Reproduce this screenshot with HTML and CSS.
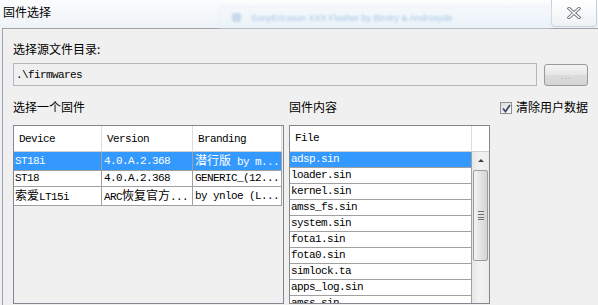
FILE: index.html
```html
<!DOCTYPE html>
<html>

<head>
  <meta charset="UTF-8">
  <title>固件选择</title>
  <link rel="stylesheet" href="styles.css">
</head>

<body>
  <div id="dlg_firmware">
    <!-- 标题栏 -->
    <div class="titlebar">
      <div class="title">固件选择</div>
      <div class="ghost">
        <span class="ghost-icon"></span>
        <span class="ghost-text">SonyEricsson XXX Flasher by Bin4ry &amp; Androxyde</span>
      </div>
      <div class="btn-close">
        <svg width="14" height="12" viewBox="0 0 14 12">
          <path d="M2 1.5 L12 10.5 M12 1.5 L2 10.5" stroke="#6d737b" stroke-width="3.2" stroke-linecap="square" fill="none" />
          <path d="M2 1.5 L12 10.5 M12 1.5 L2 10.5" stroke="#ffffff" stroke-width="1.4" stroke-linecap="square" fill="none" />
        </svg>
      </div>
    </div>

    <div class="client">
      <div class="label">选择源文件目录:</div>
      <div class="path-row">
        <input class="path-input" type="text" value=".\firmwares" readonly>
        <button class="btn-browse">...</button>
      </div>

      <div class="panes">
        <div class="pane pane-left">
          <div class="label">选择一个固件</div>
          <div class="grid">
            <table class="tb tb-firmware">
              <thead>
                <tr>
                  <th class="col-device">Device</th>
                  <th class="col-version">Version</th>
                  <th class="col-branding">Branding</th>
                </tr>
              </thead>
              <tbody>
                <tr class="selected">
                  <td>ST18i</td>
                  <td>4.0.A.2.368</td>
                  <td><span class="cjk">潜行版</span> by m...</td>
                </tr>
                <tr>
                  <td>ST18</td>
                  <td>4.0.A.2.368</td>
                  <td>GENERIC_(12...</td>
                </tr>
                <tr>
                  <td><span class="cjk">索爱</span>LT15i</td>
                  <td>ARC<span class="cjk">恢复官方</span>...</td>
                  <td>by ynloe (L...</td>
                </tr>
              </tbody>
            </table>
          </div>
        </div>

        <div class="pane pane-right">
          <div class="label">固件内容</div>
          <div class="grid grid-files">
            <div class="files-head">
              <div class="th-file">File</div>
              <div class="th-rest"></div>
            </div>
            <div class="files-body">
              <div class="file-list">
                <div class="file-row selected">adsp.sin</div>
                <div class="file-row">loader.sin</div>
                <div class="file-row">kernel.sin</div>
                <div class="file-row">amss_fs.sin</div>
                <div class="file-row">system.sin</div>
                <div class="file-row">fota1.sin</div>
                <div class="file-row">fota0.sin</div>
                <div class="file-row">simlock.ta</div>
                <div class="file-row">apps_log.sin</div>
                <div class="file-row">amss.sin</div>
              </div>
              <div class="vscroll">
                <div class="vscroll-up"></div>
                <div class="vscroll-thumb">
                  <div class="grip"></div>
                </div>
              </div>
            </div>
          </div>
        </div>

        <div class="pane pane-opts">
          <label class="check">
            <span class="check-box">
              <svg width="9" height="9" viewBox="0 0 9 9">
                <path d="M1 4.5 L3.5 7.5 L8 1" stroke="#3c4a66" stroke-width="1.8" fill="none" />
              </svg>
            </span>
            清除用户数据
          </label>
        </div>
      </div>
    </div>
  </div>
</body>

</html>
```

FILE: styles.css
```css
body {
  margin: 0;
  padding: 0;
  width: 598px;
  height: 305px;
  overflow: hidden;
  background-color: #eef2f6;
  font-family: "Noto Sans CJK SC", "Liberation Sans", sans-serif;
  font-size: 12px;
  color: #000;
}

#dlg_firmware {
  display: flex;
  flex-direction: column;
  height: 305px;
  overflow: hidden;
}

/** 标题栏 */
.titlebar {
  display: flex;
  flex-direction: row;
  flex-shrink: 0;
  height: 28px;
  background: linear-gradient(to bottom, #fbfcfd, #eef3f8);
}

.title {
  padding: 4px 0 0 3px;
  line-height: 16px;
  font-size: 12px;
}

/* 背后窗口的模糊倒影 */
.ghost {
  display: flex;
  align-items: center;
  margin-left: auto;
  align-self: flex-end;
  width: 330px;
  height: 21px;
  border: 1px solid #e6eef6;
  border-bottom: none;
  border-radius: 4px 4px 0 0;
  background: linear-gradient(to bottom, #f6f9fc, #eaf2f9);
  filter: blur(0.9px);
}

.ghost-icon {
  width: 9px;
  height: 9px;
  margin-left: 12px;
  background-color: #c8d9ea;
  border-radius: 2px;
}

.ghost-text {
  margin-left: 10px;
  font-family: "Liberation Sans", sans-serif;
  font-size: 9px;
  color: #a9c7e3;
  white-space: nowrap;
}

.btn-close {
  display: flex;
  align-items: center;
  justify-content: center;
  width: 44px;
  height: 26px;
  margin-right: 1px;
  border: 1px solid #c9d0d8;
  border-top: none;
  border-radius: 0 0 4px 4px;
  background: linear-gradient(to bottom, #ffffff, #eef1f4);
}

/** 客户区 */
.client {
  box-sizing: border-box;
  flex-grow: 1;
  margin-left: 2px;
  border-top: 1px solid #9ea3a9;
  border-left: 1px solid #9ea3a9;
  background-color: #f0f0f0;
  padding: 12px 0 0 10px;
  overflow: hidden;
}

.label {
  line-height: 16px;
  height: 16px;
  white-space: nowrap;
}

.path-row {
  display: flex;
  flex-direction: row;
  align-items: flex-start;
  margin-top: 6px;
  width: 575px;
}

.path-input {
  box-sizing: border-box;
  width: 524px;
  height: 23px;
  margin: 0;
  padding: 0 0 0 2px;
  border: 1px solid #b5b7bb;
  background-color: #f0f0f0;
  font-family: "Liberation Mono", monospace;
  font-size: 11px;
  letter-spacing: -0.6px;
  color: #000;
  outline: none;
}

.btn-browse {
  box-sizing: border-box;
  width: 44px;
  height: 22px;
  margin: 1px 0 0 7px;
  padding: 0;
  border: 1px solid #9a9a9a;
  border-radius: 3px;
  background: linear-gradient(to bottom, #f4f4f4, #e6e6e6 50%, #dcdcdc 51%, #d4d4d4);
  color: #b0b0b0;
  font-family: "Liberation Sans", sans-serif;
  font-size: 10px;
  letter-spacing: 1px;
}

/** 两个表格区域 */
.panes {
  display: flex;
  flex-direction: row;
  margin-top: 13px;
}

.pane-left {
  width: 271px;
}

.pane-right {
  width: 201px;
  margin-left: 5px;
}

.pane-opts {
  margin-left: 10px;
}

.grid {
  box-sizing: border-box;
  margin-top: 10px;
  height: 179px;
  border: 1px solid #828790;
  background-color: #f0f0f0;
  overflow: hidden;
}

.tb {
  border-collapse: collapse;
  table-layout: fixed;
  width: 268px;
  font-family: "Liberation Mono", monospace;
  font-size: 11px;
  letter-spacing: -0.6px;
}

.cjk {
  font-family: "Noto Sans CJK SC", sans-serif;
  font-size: 12px;
  letter-spacing: 0;
}

.tb th {
  height: 25px;
  padding: 0 0 0 5px;
  text-align: left;
  font-weight: normal;
  background-color: #fff;
  border-right: 1px solid #dedede;
  border-bottom: 1px solid #d0d0d0;
}

.col-device {
  width: 82px;
}

.col-version {
  width: 85px;
}

.col-branding {
  width: 83px;
}

.tb td {
  height: 15px;
  line-height: 15px;
  padding: 0 0 0 2px;
  white-space: nowrap;
  overflow: hidden;
  background-color: #fff;
  border-right: 1px solid #a0a0a0;
  border-bottom: 1px solid #a0a0a0;
}

.tb td:first-child {
  padding-left: 1px;
}

.tb tr.selected td {
  background-color: #3399ff;
  color: #fff;
}

/** 文件列表 */
.grid-files {
  display: flex;
  flex-direction: column;
}

.files-head {
  display: flex;
  flex-direction: row;
  flex-shrink: 0;
  height: 25px;
  border-bottom: 1px solid #d0d0d0;
  background-color: #fff;
  font-family: "Liberation Mono", monospace;
  font-size: 11px;
  letter-spacing: -0.6px;
}

.th-file {
  width: 176px;
  padding-left: 5px;
  line-height: 25px;
  border-right: 1px solid #dedede;
}

.files-body {
  display: flex;
  flex-direction: row;
  flex-grow: 1;
  overflow: hidden;
}

.file-list {
  width: 182px;
  background-color: #fff;
  font-family: "Liberation Mono", monospace;
  font-size: 11px;
  letter-spacing: -0.6px;
}

.file-row {
  height: 15px;
  line-height: 15px;
  padding-left: 1px;
  border-right: 1px solid #a0a0a0;
  border-bottom: 1px solid #a0a0a0;
}

.file-row.selected {
  background-color: #3399ff;
  color: #fff;
}

/* 滚动条 */
.vscroll {
  display: flex;
  flex-direction: column;
  align-items: center;
  width: 17px;
  background: linear-gradient(to right, #e6e6e6, #f2f2f2 40%, #ececec);
}

.vscroll-up {
  width: 0;
  height: 0;
  margin-top: 7px;
  border-left: 3px solid transparent;
  border-right: 3px solid transparent;
  border-bottom: 3px solid #404040;
}

.vscroll-thumb {
  display: flex;
  align-items: center;
  justify-content: center;
  box-sizing: border-box;
  width: 15px;
  height: 91px;
  margin-top: 8px;
  border: 1px solid #9b9b9b;
  border-radius: 2px;
  background: linear-gradient(to right, #f4f4f4, #e4e4e4 50%, #d4d4d4);
}

.grip {
  width: 6px;
  height: 7px;
  border-top: 1px solid #6f6f6f;
  border-bottom: 1px solid #6f6f6f;
  background: linear-gradient(to bottom, transparent 2px, #6f6f6f 2px, #6f6f6f 3px, transparent 3px, transparent 5px, #6f6f6f 5px, #6f6f6f 6px, transparent 6px);
}

/** 复选框 */
.check {
  display: flex;
  flex-direction: row;
  align-items: center;
  line-height: 16px;
  white-space: nowrap;
}

.check-box {
  display: flex;
  align-items: center;
  justify-content: center;
  box-sizing: border-box;
  width: 12px;
  height: 12px;
  margin: 2px 4px 0 0;
  border: 1px solid #8e8f8f;
  background: linear-gradient(135deg, #dcdcdc, #fafafa);
}
```
